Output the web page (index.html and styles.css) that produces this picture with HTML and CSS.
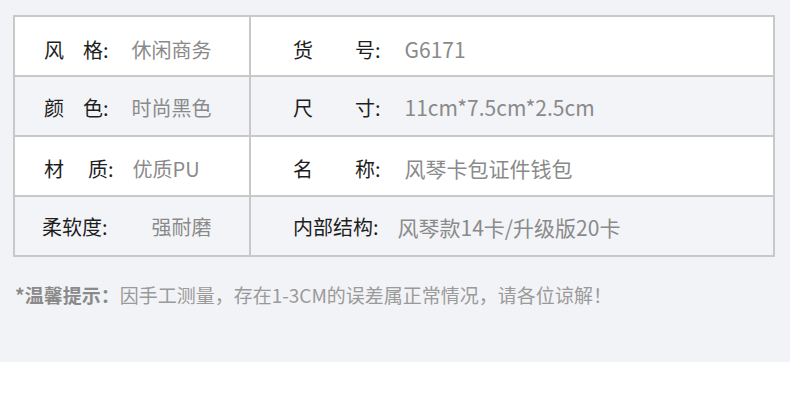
FILE: index.html
```html
<!DOCTYPE html>
<html lang="zh-CN">
<head>
<meta charset="utf-8">
<title>参数</title>
<link rel="stylesheet" href="styles.css">
</head>
<body>
<div class="panel">
  <div class="table">
    <div class="row r1">
      <div class="cell left"><span class="lab"><span class="sp1">风</span>格:</span><span class="val v1">休闲商务</span></div>
      <div class="cell right"><span class="lab"><span class="sp2">货</span>号:</span><span class="val v2">G6171</span></div>
    </div>
    <div class="row alt r2">
      <div class="cell left"><span class="lab"><span class="sp1">颜</span>色:</span><span class="val v1">时尚黑色</span></div>
      <div class="cell right"><span class="lab"><span class="sp2">尺</span>寸:</span><span class="val v2">11cm*7.5cm*2.5cm</span></div>
    </div>
    <div class="row r3">
      <div class="cell left"><span class="lab"><span class="sp1b">材</span>质:</span><span class="val v1b">优质PU</span></div>
      <div class="cell right"><span class="lab"><span class="sp2">名</span>称:</span><span class="val v2">风琴卡包证件钱包</span></div>
    </div>
    <div class="row alt last">
      <div class="cell left wide"><span class="lab">柔软度:</span><span class="val v3">强耐磨</span></div>
      <div class="cell right"><span class="lab">内部结构:</span><span class="val v4">风琴款14卡/升级版20卡</span></div>
    </div>
  </div>
  <p class="note"><b>*温馨提示：</b>因手工测量，存在1-3CM的误差属正常情况，请各位谅解！</p>
</div>
</body>
</html>
```
FILE: styles.css
```css
html, body {
  margin: 0;
  padding: 0;
  background: #ffffff;
  font-family: "Noto Sans CJK SC", "Noto Sans", sans-serif;
}
.panel {
  background: #f2f3f6;
  height: 362px;
  padding-top: 15px;
  padding-left: 13px;
  box-sizing: border-box;
  overflow: hidden;
}
.table {
  width: 762px;
  border: 2px solid #c8c8c8;
  box-sizing: border-box;
  background: #ffffff;
}
.row {
  display: flex;
  height: 60px;
  border-bottom: 2px solid #c8c8c8;
  box-sizing: border-box;
  background: #ffffff;
}
.row.alt { background: #f3f4f7; }
.row.last { border-bottom: none; height: 58px; }
.cell {
  display: flex;
  align-items: center;
  font-size: 20px;
  line-height: 1;
  white-space: nowrap;
  padding-top: 3px;
  box-sizing: border-box;
}
.row.r1 .cell { padding-top: 7px; }
.row.r2 .cell { padding-top: 3px; }
.row.r3 .cell { padding-top: 5px; }
.row.last .cell { padding-top: 2px; }
.cell.left {
  width: 236px;
  border-right: 2px solid #c8c8c8;
  padding-left: 29px;
}
.cell.left.wide { padding-left: 27px; }
.cell.right {
  flex: 1;
  padding-left: 42px;
}
.lab { color: #1e1e1e; }
.sp1 { margin-right: 19px; }
.sp1b { margin-right: 24px; }
.sp2 { margin-right: 42px; }
.val { color: #8a8a8a; }
.cell.right .val { font-size: 21px; }
.v1 { margin-left: 23px; }
.v1b { margin-left: 19px; }
.v2 { margin-left: 24px; }
.v3 { margin-left: 44px; }
.v4 { margin-left: 19px; }
.note {
  margin: 26px 0 0 2px;
  font-size: 19px;
  line-height: 24px;
  color: #9a9a9a;
  white-space: nowrap;
}
.note b {
  font-weight: 700;
  color: #8a8a8a;
}
```
